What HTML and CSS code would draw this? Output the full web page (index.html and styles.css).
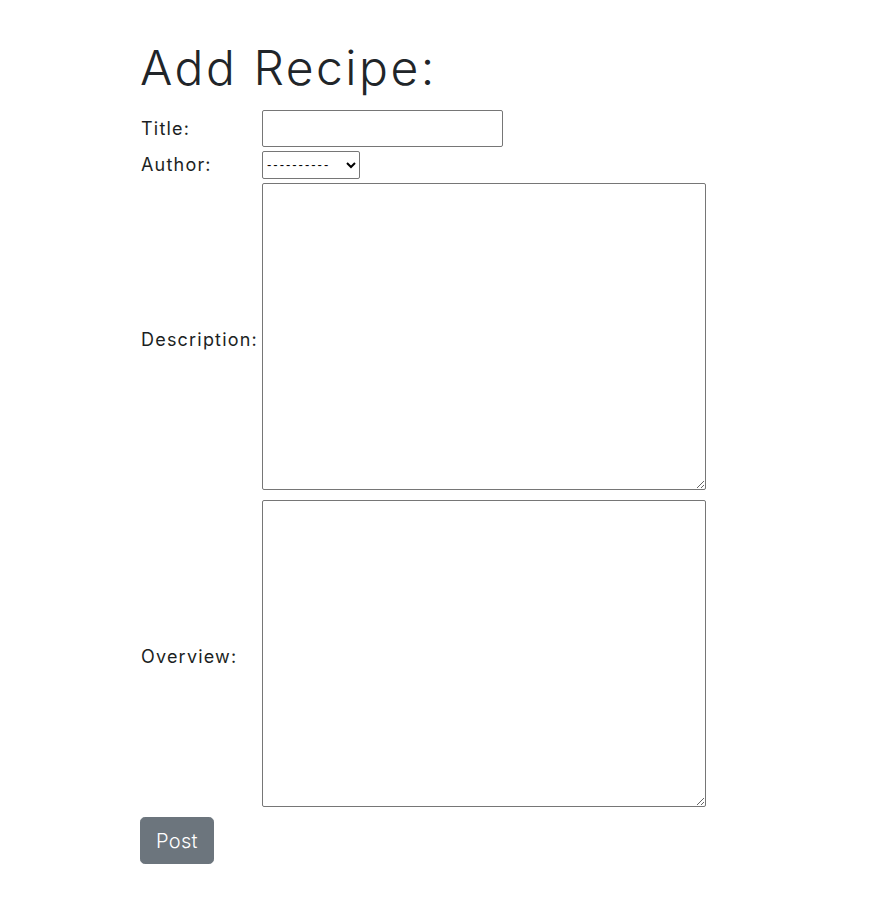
FILE: index.html
```html
<!DOCTYPE html>
<html lang="en">
<head>
    <meta charset="UTF-8">
    <meta name="viewport" content="width=device-width, initial-scale=1.0">
    <title>Add Recipe</title>
    <link rel="stylesheet" href="styles.css">
</head>
<body>
    <div class="container">
        <h1>Add Recipe:</h1>
        <form method="post">
            <table class="form-table">
                <tr>
                    <th><label for="id_title">Title:</label></th>
                    <td><input type="text" name="title" id="id_title" class="text-input"></td>
                </tr>
                <tr>
                    <th><label for="id_author">Author:</label></th>
                    <td>
                        <select name="author" id="id_author" class="select-input">
                            <option value="" selected>----------</option>
                        </select>
                    </td>
                </tr>
                <tr>
                    <th><label for="id_description">Description:</label></th>
                    <td><textarea name="description" id="id_description" class="area-input"></textarea></td>
                </tr>
                <tr>
                    <th><label for="id_overview">Overview:</label></th>
                    <td><textarea name="overview" id="id_overview" class="area-input"></textarea></td>
                </tr>
            </table>
            <button type="submit" class="btn btn-secondary btn-lg">Post</button>
        </form>
    </div>
</body>
</html>
```

FILE: styles.css
```css
* {
    box-sizing: border-box;
}

body {
    margin: 0;
    font-family: 'Inter', 'Noto Sans', sans-serif;
    color: #212529;
    background: #fff;
}

.container {
    max-width: 590px;
    margin: 0 auto;
    padding-top: 39px;
}

h1 {
    font-weight: 300;
    font-size: 48px;
    letter-spacing: 2.5px;
    line-height: 1.2;
    margin: 0 0 10px 0;
}

.form-table {
    border-spacing: 2px;
    margin-left: -2px;
}

.form-table th {
    text-align: left;
    font-weight: 400;
    font-size: 18px;
    letter-spacing: 1.2px;
    vertical-align: middle;
    padding: 1px;
    color: #1c1f23;
}

.form-table td {
    padding: 1px;
}

.text-input {
    width: 241px;
    height: 37px;
    border: 1px solid #767676;
    border-radius: 2px;
    font-size: 16px;
    vertical-align: middle;
}

.select-input {
    width: 98px;
    height: 28px;
    border: 1px solid #767676;
    border-radius: 2px;
    font-family: 'Liberation Sans', sans-serif;
    font-size: 13px;
    letter-spacing: 2px;
    background: #fff;
    color: #000;
    vertical-align: middle;
}

.area-input {
    width: 444px;
    height: 307px;
    margin-bottom: 2px;
    border: 1px solid #767676;
    border-radius: 2px;
}

.btn {
    font-family: inherit;
    border: 1px solid transparent;
    cursor: pointer;
    margin-top: 1px;
}

.btn-secondary {
    background: #6c757d;
    border-color: #6c757d;
    color: #fff;
}

.btn-lg {
    font-size: 20px;
    font-weight: 300;
    letter-spacing: 0.3px;
    line-height: 1.5;
    padding: 8px 15px 7px;
    border-radius: 4.8px;
}
```
